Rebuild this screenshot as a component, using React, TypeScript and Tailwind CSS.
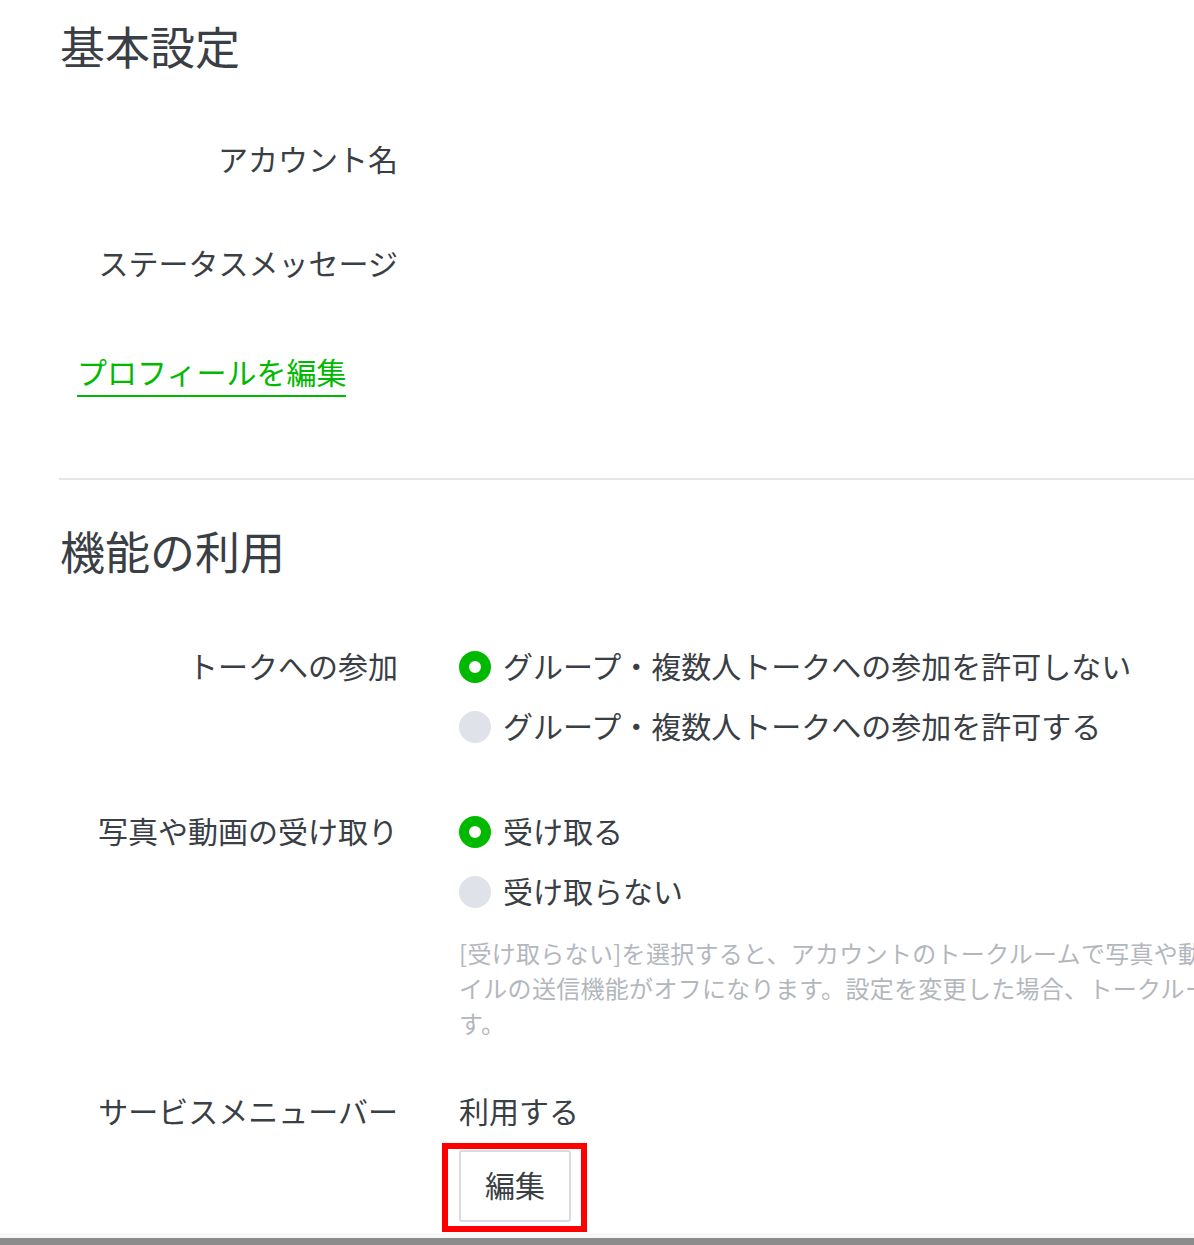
const font = { fontFamily: '"Noto Sans CJK JP", "Noto Sans", sans-serif' };

function Radio({ checked, label }: { checked: boolean; label: string }) {
  return (
    <div className="flex h-[60px] items-center gap-[12px] whitespace-nowrap">
      {checked ? (
        <span className="h-[32px] w-[32px] shrink-0 rounded-full border-[10px] border-[#00b900] bg-white" />
      ) : (
        <span className="h-[32px] w-[32px] shrink-0 rounded-full bg-[#dfe2e8]" />
      )}
      <span className="pb-[5px]">{label}</span>
    </div>
  );
}

function Row({ label, children, className = "" }: { label: string; children: React.ReactNode; className?: string }) {
  return (
    <div className={"flex " + className}>
      <div className="flex h-[60px] w-[338px] shrink-0 items-center justify-end whitespace-nowrap pb-[5px]">{label}</div>
      <div className="ml-[61px] min-w-0 flex-1">{children}</div>
    </div>
  );
}

export default function App() {
  return (
    <div
      className="relative flex h-[1245px] w-[1194px] flex-col overflow-hidden bg-white text-[30px] leading-none text-[#3a3e45]"
      style={font}
    >
      {/* 基本設定 */}
      <div className="pl-[60px]">
        <h2 className="flex h-[96px] items-center pb-[5px] text-[45px] font-normal">基本設定</h2>
        <div className="mt-3 flex h-[104px] w-[338px] items-center justify-end pb-[4px]">アカウント名</div>
        <div className="flex h-[104px] w-[338px] items-center justify-end pb-[4px]">ステータスメッセージ</div>
        <a className="ml-[17px] mt-[37px] inline-block border-b-2 border-[#00b900] pb-[6px] leading-[36px] text-[#00b900]">
          プロフィールを編集
        </a>
      </div>

      <div className="ml-[59px] mt-[81px] h-[2px] shrink-0 bg-[#e6e6e6]" />

      {/* 機能の利用 */}
      <div className="pl-[60px]">
        <h2 className="mt-[25px] flex h-[96px] items-center pb-[5px] text-[45px] font-normal">機能の利用</h2>

        <Row label="トークへの参加" className="mt-[36px]">
          <Radio checked label="グループ・複数人トークへの参加を許可しない" />
          <Radio checked={false} label="グループ・複数人トークへの参加を許可する" />
        </Row>

        <Row label="写真や動画の受け取り" className="mt-[45px]">
          <Radio checked label="受け取る" />
          <Radio checked={false} label="受け取らない" />
          <div className="mt-[13px] whitespace-nowrap text-[24px] leading-[35px] tracking-[0.3px] text-[#b3b7bd]">
            <div>[受け取らない]を選択すると、アカウントのトークルームで写真や動画、ファ</div>
            <div>イルの送信機能がオフになります。設定を変更した場合、トークルームに反映されるまで時間がかかる場合がありま</div>
            <div>す。</div>
          </div>
        </Row>

        <Row label="サービスメニューバー" className="mt-[42px]">
          <div className="flex h-[60px] items-center pb-[5px]">利用する</div>
          <div className="relative mt-[8px] w-fit">
            <button className="flex h-[72px] w-[112px] items-center justify-center rounded-[3px] border-2 border-[#d8dbe0] bg-white pb-[4px] text-[30px] text-[#3a3e45]">
              編集
            </button>
            <div className="pointer-events-none absolute -left-[17px] -right-[16px] -top-[7px] -bottom-[10px] border-[6px] border-[#ff0000]" />
          </div>
        </Row>
      </div>

      <div className="flex-1" />
      <div className="h-[5px] shrink-0 bg-[#f8f8f8]" />
      <div className="h-[7px] shrink-0 bg-[#8c8c8c]" />
    </div>
  );
}
